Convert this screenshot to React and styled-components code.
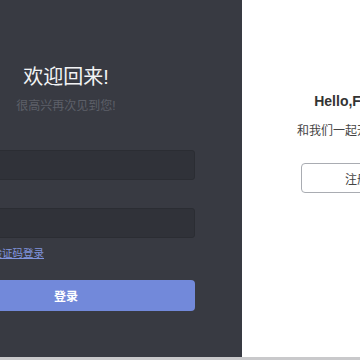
import React from 'react'
import styled, { createGlobalStyle } from 'styled-components'

const GlobalStyle = createGlobalStyle`
    html, body {
        margin: 0;
        padding: 0;
        background: #c9c9cb;
        overflow: hidden;
        font-family: "Liberation Sans", "Noto Sans CJK SC", sans-serif;
    }
`

function App() {
    return (
        <>
            <GlobalStyle />
            <Card>
                <SignInPanel>
                    <Form>
                        <Title>欢迎回来!</Title>
                        <Subtitle>很高兴再次见到您!</Subtitle>
                        <Input type="text" />
                        <Input type="password" />
                        <LinkRow>
                            <TextLink href="#">使用手机号验证码登录</TextLink>
                        </LinkRow>
                        <SubmitButton>登录</SubmitButton>
                    </Form>
                </SignInPanel>
                <SignUpPanel>
                    <Hello>Hello,Friend!</Hello>
                    <Intro>和我们一起开始旅程吧</Intro>
                    <GhostButton>注册</GhostButton>
                </SignUpPanel>
            </Card>
        </>
    )
}

export default App

const Card = styled.div`
    display: flex;
    height: 357px;
    margin-left: -110px;
`

const SignInPanel = styled.div`
    flex: 0 0 352px;
    box-sizing: border-box;
    padding: 0 47px;
    background: #383a42;
`

const Form = styled.div`
    width: 258px;
    display: flex;
    flex-direction: column;
    align-items: center;
    padding-top: 65px;
`

const Title = styled.div`
    font-size: 20px;
    color: #f2f3f5;
    line-height: 24px;
`

const Subtitle = styled.div`
    margin-top: 9px;
    font-size: 12px;
    color: #5d6069;
    line-height: 16px;
`

const Input = styled.input`
    box-sizing: border-box;
    width: 100%;
    height: 30px;
    margin-top: 28px;
    border: 1px solid #2b2d33;
    border-radius: 3px;
    background: #303239;
    outline: none;
    &:first-of-type {
        margin-top: 36px;
    }
`

const LinkRow = styled.div`
    width: 100%;
    margin-top: 7px;
    line-height: 14px;
`

const TextLink = styled.a`
    margin-left: 2px;
    font-size: 10.5px;
    color: #8094de;
    text-decoration: underline;
`

const SubmitButton = styled.button`
    width: 100%;
    height: 31px;
    margin-top: 20px;
    border: none;
    border-radius: 4px;
    background: #7289da;
    color: #fff;
    font-family: inherit;
    font-size: 12px;
    font-weight: bold;
`

const SignUpPanel = styled.div`
    flex: 0 0 230px;
    display: flex;
    flex-direction: column;
    align-items: center;
    padding-top: 93px;
    background: #fff;
`

const Hello = styled.div`
    font-size: 14px;
    font-weight: bold;
    color: #333;
    line-height: 16px;
`

const Intro = styled.div`
    margin-top: 14px;
    font-size: 12px;
    color: #444;
    line-height: 16px;
`

const GhostButton = styled.button`
    width: 112px;
    height: 30px;
    margin-top: 24px;
    border: 1px solid #a9acb2;
    border-radius: 4px;
    background: #fff;
    color: #444;
    font-family: inherit;
    font-size: 12px;
`
